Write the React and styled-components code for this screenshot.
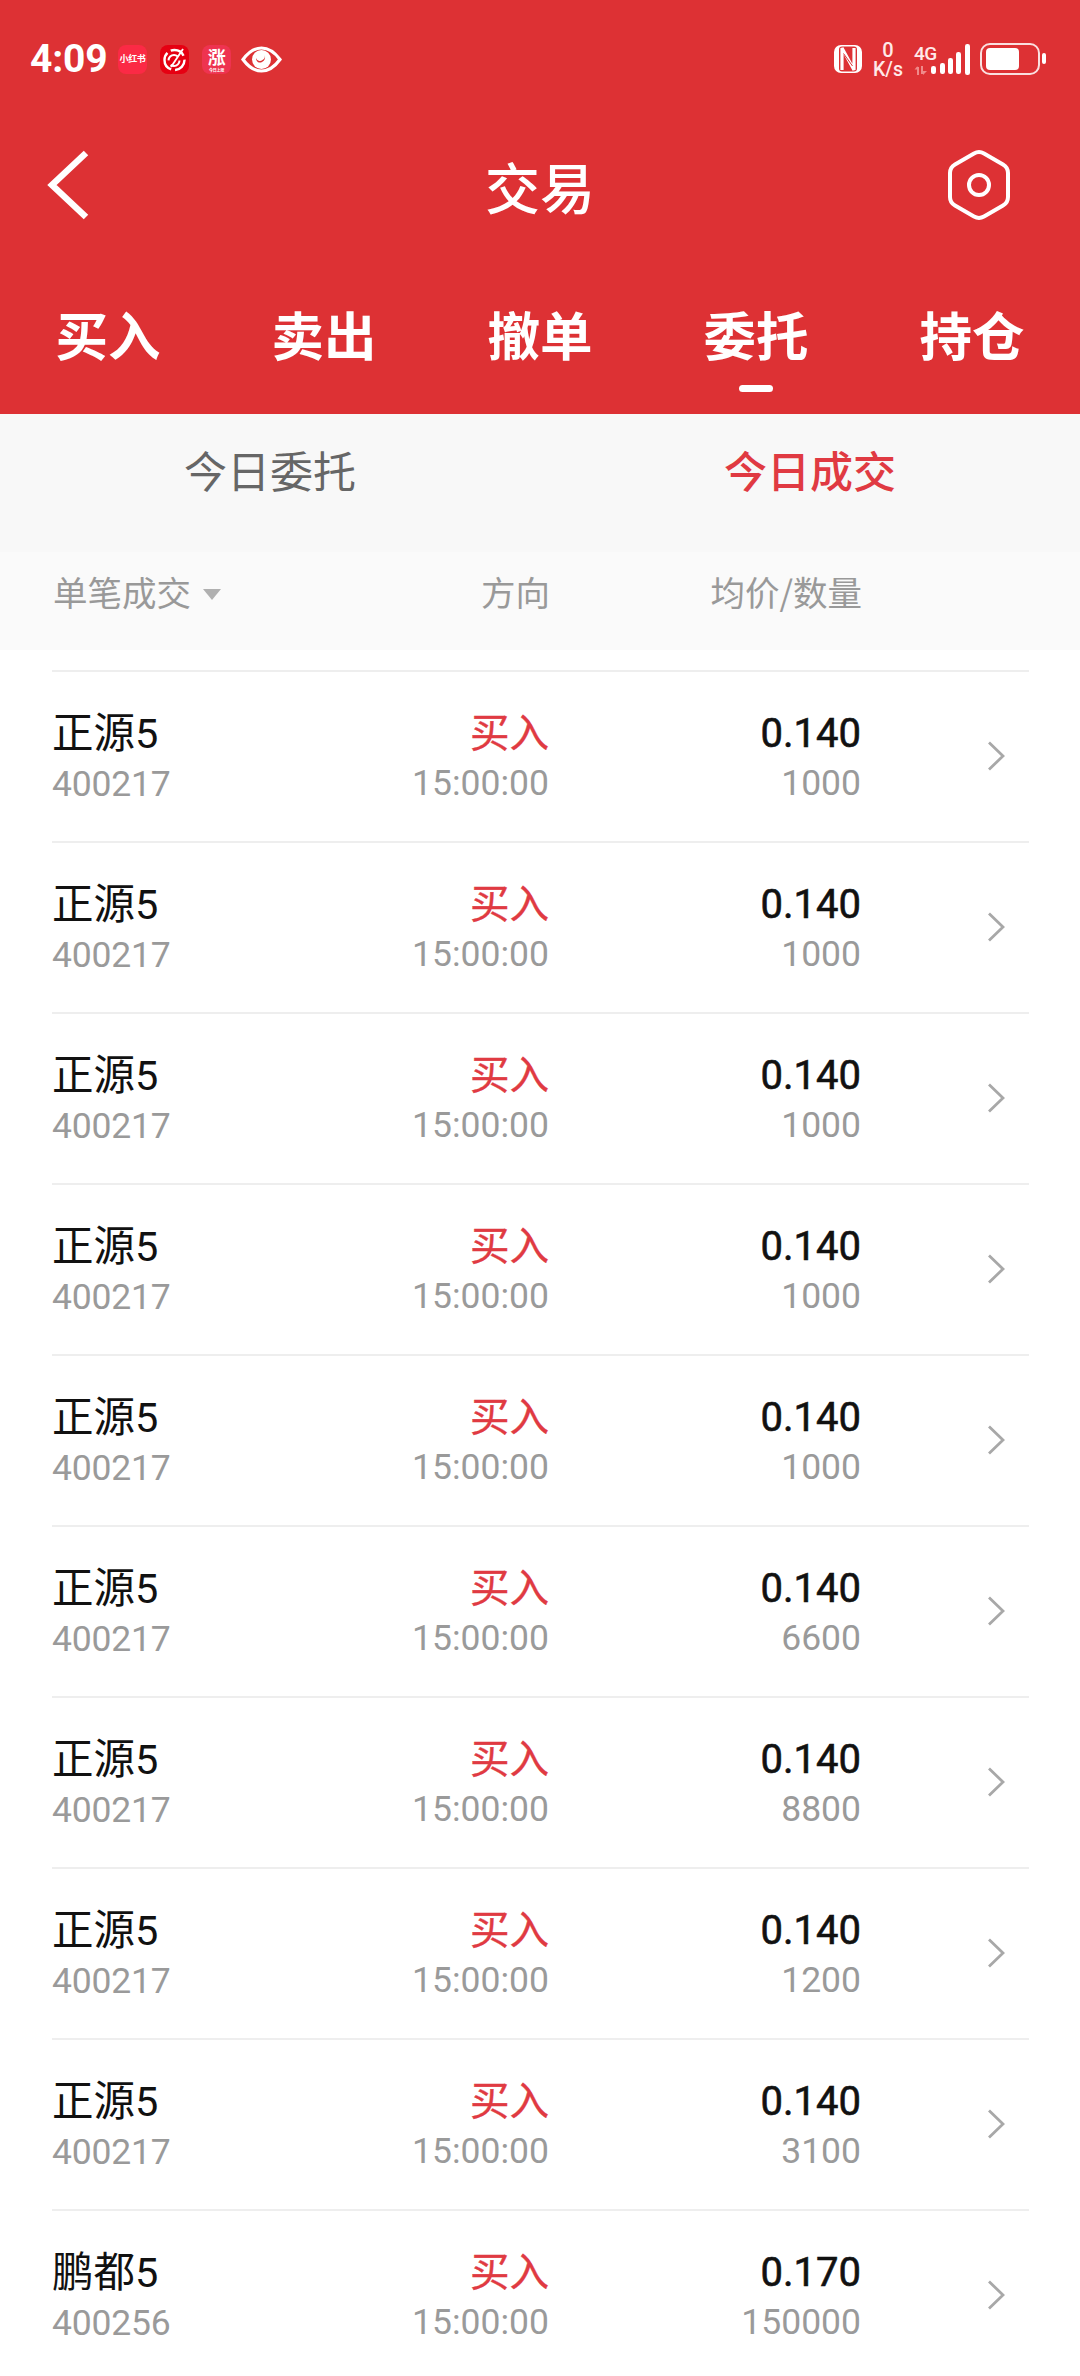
import React from "react";
import styled, { createGlobalStyle } from "styled-components";

const Global = createGlobalStyle`
  html, body { margin: 0; padding: 0; background: #fff; }
  * { box-sizing: border-box; }
  body { font-family: Roboto, "Noto Sans CJK SC", sans-serif; }
`;
const Page = styled.div`
  width: 1080px; height: 2376px; overflow: hidden; background: #fff; display: flex; flex-direction: column;
`;
const Header = styled.header`
  background: #dd3134; color: #fff; height: 414px; display: flex; flex-direction: column; flex: none;
`;
const StatusBar = styled.div`
  height: 118px; display: flex; align-items: center; justify-content: space-between; padding: 0 34px 0 30px;
`;
const StatusLeft = styled.div`
  display: flex; align-items: center;
`;
const Time = styled.span`
  font-size: 39px; font-weight: 700; width: 88px; letter-spacing: -0.2px; line-height: 1;
`;
const AppIcon = styled.span`
  width: 29px; height: 29px; border-radius: 8px; margin-right: 13px; background: ${p => p.$bg};
  display: flex; flex-direction: column; align-items: center; justify-content: center;
  color: #fff; font-weight: 700; font-family: "Noto Sans CJK SC", sans-serif; flex: none;
`;
const TinyLabel = styled.span`
  font-size: ${p => p.$size}px; line-height: ${p => p.$lh}px; margin-top: ${p => p.$mt || 0}px;
  white-space: nowrap; letter-spacing: -0.3px;
`;
const StatusRight = styled.div`
  display: flex; align-items: center;
`;
const Speed = styled.div`
  width: 32px; margin: 0 10px 0 10px; display: flex; flex-direction: column; align-items: center;
  font-weight: 500; color: #ffe9e9;
`;
const SpeedNum = styled.span`
  font-size: 20px; line-height: 20px;
`;
const SpeedUnit = styled.span`
  font-size: 19.5px; line-height: 19px; white-space: nowrap;
`;
const Net = styled.div`
  width: 18px; margin-right: -1px; display: flex; flex-direction: column; align-items: flex-start;
  font-weight: 500; color: #ffe9e9;
`;
const NetLabel = styled.span`
  font-size: 19px; line-height: 20px; white-space: nowrap; letter-spacing: -0.5px;
`;
const TopBar = styled.div`
  height: 134px; display: grid; grid-template-columns: 1fr auto 1fr; align-items: center; padding: 0 47px;
`;
const Title = styled.h1`
  margin: 0; font-size: 55px; font-weight: 500; line-height: 60px; font-family: "Noto Sans CJK SC", sans-serif;
`;
const IconSlot = styled.div`
  display: flex; justify-content: ${p => p.$end ? "flex-end" : "flex-start"};
  padding-right: ${p => p.$end ? 22 : 0}px;
`;
const Tabs = styled.nav`
  flex: 1; display: grid; grid-template-columns: repeat(5, 1fr); padding-top: 46px;
`;
const Tab = styled.div`
  display: flex; flex-direction: column; align-items: center;
`;
const TabLabel = styled.span`
  font-size: 52.5px; font-weight: 700; line-height: 70px; font-family: "Noto Sans CJK SC", sans-serif;
`;
const Indicator = styled.span`
  width: 34px; height: 7px; border-radius: 4px; background: #fff; margin-top: 17px;
`;
const SubTabs = styled.div`
  height: 138px; flex: none; background: #f8f8f8; display: grid; grid-template-columns: 1fr 1fr; padding-top: 25px;
`;
const SubTab = styled.div`
  text-align: center; font-size: 43px; line-height: 60px; color: ${p => p.$active ? "#e03a42" : "#666"};
  font-family: "Noto Sans CJK SC", sans-serif; font-weight: ${p => p.$active ? 500 : 400};
`;
const Columns = styled.div`
  display: grid; grid-template-columns: 297px 200px 312px 1fr; align-items: center;
`;
const ColHead = styled(Columns)`
  height: 98px; flex: none; background: #fafafa; padding: 0 51px 21px 53px; color: #999; font-size: 34.5px;
  font-family: "Noto Sans CJK SC", sans-serif;
`;
const HeadFirst = styled.div`
  display: flex; align-items: center; gap: 12px;
`;
const Triangle = styled.span`
  width: 0; height: 0; border-left: 9px solid transparent; border-right: 9px solid transparent;
  border-top: 11px solid #b0b0b0; margin-top: 8px;
`;
const HeadRight = styled.div`
  text-align: right;
`;
const List = styled.div`
  margin: 20px 51px 0 52px; display: flex; flex-direction: column;
`;
const Row = styled(Columns)`
  height: 171px; flex: none; border-top: 2px solid #eeeeee; align-items: stretch; padding-top: 37px;
`;
const Cell = styled.div`
  display: flex; flex-direction: column; align-items: ${p => p.$right ? "flex-end" : "flex-start"};
`;
const Primary = styled.span`
  font-size: ${p => p.$size}px; line-height: 50px; height: 50px; color: ${p => p.$color};
  -webkit-text-stroke: ${p => p.$stroke || 0}px ${p => p.$color}; white-space: nowrap;
`;
const Secondary = styled.span`
  font-size: 35.5px; line-height: 48px; color: #9a9a9a; white-space: nowrap; margin-top: ${p => p.$mt || 0}px;
  letter-spacing: ${p => p.$ls || 0}px;
`;
const ChevronCell = styled.div`
  display: flex; justify-content: flex-end; padding: 32px 24px 0 0;
`;

const data = [
  ["正源5", "400217", "0.140", "1000"],
  ["正源5", "400217", "0.140", "1000"],
  ["正源5", "400217", "0.140", "1000"],
  ["正源5", "400217", "0.140", "1000"],
  ["正源5", "400217", "0.140", "1000"],
  ["正源5", "400217", "0.140", "6600"],
  ["正源5", "400217", "0.140", "8800"],
  ["正源5", "400217", "0.140", "1200"],
  ["正源5", "400217", "0.140", "3100"],
  ["鹏都5", "400256", "0.170", "150000"],
];

const Swirl = () => (
  <svg width="29" height="29" viewBox="0 0 29 29" fill="none">
    <circle cx="14.5" cy="15" r="10" stroke="#fff" strokeWidth="2.4" strokeDasharray="15 4 20 4" />
    <circle cx="14" cy="15.5" r="5.5" stroke="#fff" strokeWidth="2" strokeDasharray="12 5" />
    <path d="M23 4 L11 22" stroke="#fff" strokeWidth="1.8" />
  </svg>
);
const Eye = () => (
  <svg width="41" height="27" viewBox="0 0 41 27" style={{ flex: "none", marginLeft: -3 }}>
    <path d="M2 13.5 C9 4 15 2 20.5 2 C26 2 32 4 39 13.5 C32 23 26 25 20.5 25 C15 25 9 23 2 13.5 Z" fill="none" stroke="#fff" strokeWidth="3.2" />
    <circle cx="20.5" cy="13.5" r="9.5" fill="#fff" />
    <path d="M15 12 a4 4 0 0 0 6 4 a5 5 0 0 0 2.5 -7 a4 4 0 0 1 -2 5 a4 4 0 0 1 -6.5 -2z" fill="#dd3134" />
  </svg>
);
const Nfc = () => (
  <svg width="28" height="28" viewBox="0 0 28 28" style={{ flex: "none" }}>
    <rect width="28" height="28" rx="7" fill="#fff" />
    <rect x="5" y="1.5" width="18" height="25" rx="3" fill="#dd3134" />
    <path d="M8 25 V3 L20 25 V3" fill="none" stroke="#fff" strokeWidth="3.2" strokeLinejoin="bevel" />
    <path d="M9.5 8.5 L18.5 21" stroke="#dd3134" strokeWidth="1" />
  </svg>
);
const Bars = () => (
  <svg width="40" height="31" viewBox="0 0 40 31" style={{ flex: "none" }}>
    <g fill="#fff">
      <rect x="0" y="22" width="5" height="8" rx="2.2" />
      <rect x="9" y="19" width="5" height="11" rx="2.2" />
      <rect x="17" y="14" width="5" height="16" rx="2.2" />
      <rect x="25" y="8" width="5" height="22" rx="2.2" />
      <rect x="34" y="0" width="5" height="31" rx="2.2" />
    </g>
  </svg>
);
const Arrows = () => (
  <svg width="14" height="9" viewBox="0 0 14 9" style={{ display: "block", marginTop: 2 }}>
    <g fill="#ef8a8a">
      <rect x="3" y="1" width="2" height="8" />
      <path d="M0.5 3.5 L3.5 0 V3.5z" />
      <rect x="7" y="0" width="2" height="8" />
      <path d="M9 9 V5 H13z" />
    </g>
  </svg>
);
const Battery = () => (
  <svg width="66" height="33" viewBox="0 0 66 33" style={{ flex: "none", marginLeft: 9 }}>
    <rect x="1" y="1" width="58" height="30" rx="9" fill="none" stroke="#fff" strokeOpacity="0.85" strokeWidth="2" />
    <rect x="6" y="5" width="33" height="22" rx="4" fill="#fff" />
    <rect x="62" y="10" width="4" height="11" rx="2" fill="#fff" />
  </svg>
);
const Back = () => (
  <svg width="42" height="70" viewBox="0 0 42 70">
    <path d="M39 3 L5 35 L39 67" fill="none" stroke="#fff" strokeWidth="6.5" />
  </svg>
);
const Settings = () => (
  <svg width="64" height="70" viewBox="0 0 64 70" fill="none" stroke="#fff" strokeWidth="4">
    <path d="M27 3.5 a10 10 0 0 1 10 0 L56 14.5 a10 10 0 0 1 5 8.6 V46.9 a10 10 0 0 1 -5 8.6 L37 66.5 a10 10 0 0 1 -10 0 L8 55.5 a10 10 0 0 1 -5 -8.6 V23.1 a10 10 0 0 1 5 -8.6 Z" />
    <circle cx="32" cy="35" r="10" />
  </svg>
);
const RowChevron = () => (
  <svg width="18" height="30" viewBox="0 0 18 30">
    <path d="M2 1.5 L16 15 L2 28.5" fill="none" stroke="#a8a8a8" strokeWidth="2.8" />
  </svg>
);

export default function App() {
  return (
    <Page>
      <Global />
      <Header>
        <StatusBar>
          <StatusLeft>
            <Time>4:09</Time>
            <AppIcon $bg="#fb2a45"><TinyLabel $size={9} $lh={10}>小红书</TinyLabel></AppIcon>
            <AppIcon $bg="#e60012"><Swirl /></AppIcon>
            <AppIcon $bg="#ee3350">
              <TinyLabel $size={18} $lh={18}>涨</TinyLabel>
              <TinyLabel $size={4} $lh={4} $mt={3}>今日上涨</TinyLabel>
            </AppIcon>
            <Eye />
          </StatusLeft>
          <StatusRight>
            <Nfc />
            <Speed>
              <SpeedNum>0</SpeedNum>
              <SpeedUnit>K/s</SpeedUnit>
            </Speed>
            <Net>
              <NetLabel>4G</NetLabel>
              <Arrows />
            </Net>
            <Bars />
            <Battery />
          </StatusRight>
        </StatusBar>
        <TopBar>
          <IconSlot><Back /></IconSlot>
          <Title>交易</Title>
          <IconSlot $end><Settings /></IconSlot>
        </TopBar>
        <Tabs>
          {["买入", "卖出", "撤单", "委托", "持仓"].map((t) => (
            <Tab key={t}>
              <TabLabel>{t}</TabLabel>
              {t === "委托" && <Indicator />}
            </Tab>
          ))}
        </Tabs>
      </Header>
      <SubTabs>
        <SubTab>今日委托</SubTab>
        <SubTab $active>今日成交</SubTab>
      </SubTabs>
      <ColHead>
        <HeadFirst>单笔成交<Triangle /></HeadFirst>
        <HeadRight>方向</HeadRight>
        <HeadRight>均价/数量</HeadRight>
        <span />
      </ColHead>
      <List>
        {data.map((d, i) => (
          <Row key={i}>
            <Cell>
              <Primary $size={41.5} $color="#111">{d[0]}</Primary>
              <Secondary $ls={-0.2} $mt={1}>{d[1]}</Secondary>
            </Cell>
            <Cell $right>
              <Primary $color="#e03a42" $size={39.5} $stroke={0.4}>买入</Primary>
              <Secondary>15:00:00</Secondary>
            </Cell>
            <Cell $right>
              <Primary $size={40} $color="#111" $stroke={0.6}>{d[2]}</Primary>
              <Secondary>{d[3]}</Secondary>
            </Cell>
            <ChevronCell><RowChevron /></ChevronCell>
          </Row>
        ))}
      </List>
    </Page>
  );
}
